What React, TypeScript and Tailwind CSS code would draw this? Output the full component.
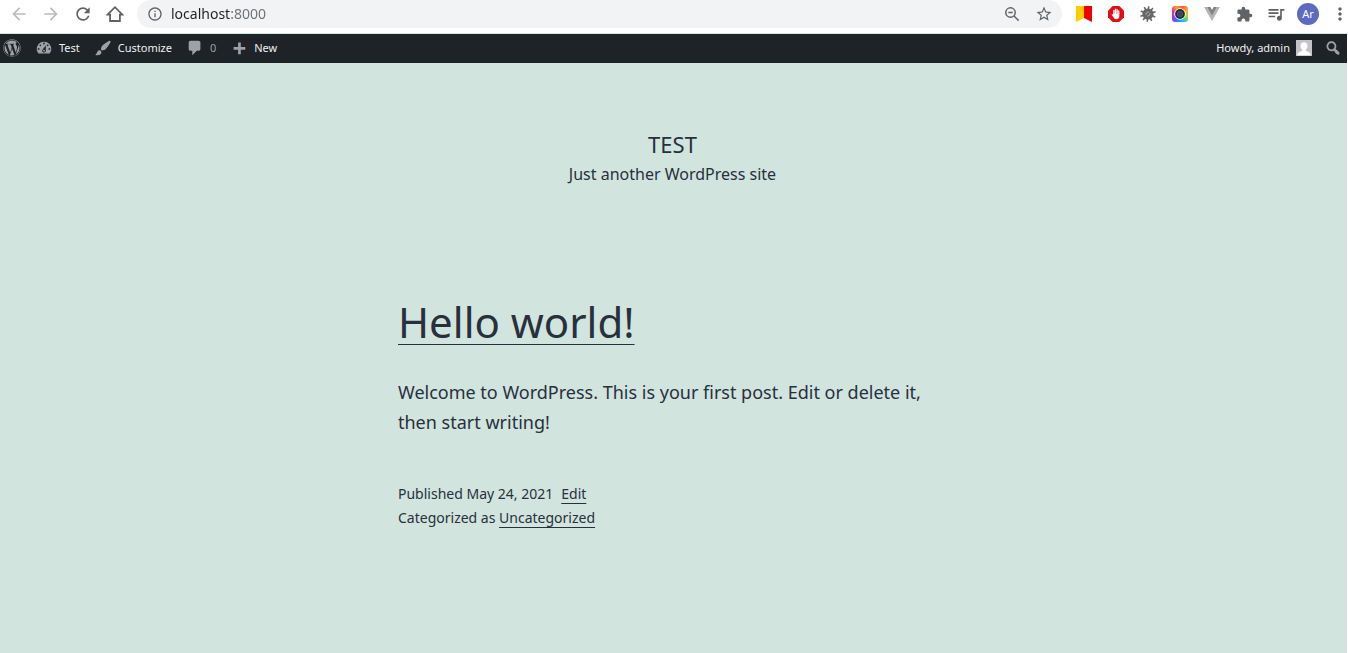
import type { ReactNode } from "react";
import {
  MdArrowBack,
  MdArrowForward,
  MdExtension,
  MdInfoOutline,
  MdMoreVert,
  MdQueueMusic,
  MdRefresh,
  MdStarBorder,
} from "react-icons/md";
import { FaWordpress } from "react-icons/fa";

const dashicons = {
  dashboard:
    "M3.76 16h12.48A7.998 7.998 0 0 0 10 3a7.998 7.998 0 0 0-6.24 13zM10 4c.55 0 1 .45 1 1s-.45 1-1 1-1-.45-1-1 .45-1 1-1zM6 6c.55 0 1 .45 1 1s-.45 1-1 1-1-.45-1-1 .45-1 1-1zm8 0c.55 0 1 .45 1 1s-.45 1-1 1-1-.45-1-1 .45-1 1-1zm-5.37 5.55L12 7v6c0 1.1-.9 2-2 2s-2-.9-2-2c0-.57.24-1.08.63-1.45zM4 10c.55 0 1 .45 1 1s-.45 1-1 1-1-.45-1-1 .45-1 1-1zm12 0c.55 0 1 .45 1 1s-.45 1-1 1-1-.45-1-1 .45-1 1-1zm-5 3c0-.55-.45-1-1-1s-1 .45-1 1 .45 1 1 1 1-.45 1-1z",
  brush:
    "M18.33 3.57s.27-.8-.31-1.36c-.53-.52-1.22-.24-1.22-.24-.61.3-5.76 3.47-7.67 5.57-.86.96-2.06 3.79-1.09 4.82.92.98 3.96-.17 4.79-1 2.06-2.06 5.21-7.17 5.5-7.79zM1.4 17.65c2.37-1.56 1.46-3.41 3.23-4.64.93-.65 2.22-.62 3.08.29.63.67.8 2.57-.16 3.46-1.57 1.45-4 1.55-6.15.89z",
  comments:
    "M5 2h9c1.1 0 2 .9 2 2v7c0 1.1-.9 2-2 2h-2l-5 5v-5H5c-1.1 0-2-.9-2-2V4c0-1.1.9-2 2-2z",
  plus: "M17 9v3h-5v5H9v-5H4V9h5V4h3v5h5z",
  search:
    "M12.14 4.18c1.87 1.87 2.11 4.75.72 6.89.12.1.22.21.36.31.2.16.47.36.81.59.34.24.56.39.66.47.42.31.73.57.94.78.32.32.6.65.84 1 .25.35.44.69.59 1.04.14.35.21.68.18 1-.02.32-.14.59-.36.81s-.49.34-.81.36c-.31.02-.65-.04-.99-.19-.35-.14-.7-.34-1.04-.59-.35-.24-.68-.52-1-.84-.21-.21-.47-.52-.77-.93-.1-.13-.25-.35-.47-.66-.22-.32-.4-.57-.56-.78-.16-.2-.29-.35-.44-.5-2.07 1.09-4.69.76-6.44-.98-2.14-2.15-2.14-5.64 0-7.78 2.15-2.15 5.63-2.15 7.78 0zm-1.41 6.36c1.36-1.37 1.36-3.58 0-4.95-1.37-1.37-3.59-1.37-4.95 0-1.37 1.37-1.37 3.58 0 4.95 1.36 1.37 3.58 1.37 4.95 0z",
};

function Dashicon({ name }: { name: keyof typeof dashicons }) {
  return (
    <svg viewBox="0 0 20 20" className="size-[18px] shrink-0 fill-[#9ca2a7]" aria-hidden="true">
      <path d={dashicons[name]} />
    </svg>
  );
}

function ToolButton({ label, children, disabled }: { label: string; children: ReactNode; disabled?: boolean }) {
  return (
    <button
      type="button"
      aria-label={label}
      disabled={disabled}
      className="flex h-7 w-8 shrink-0 items-center justify-center text-[#5f6368] disabled:text-[#babcbe]"
    >
      {children}
    </button>
  );
}

function HomeIcon() {
  return (
    <svg viewBox="0 0 18 18" className="size-[18px]" fill="none" stroke="currentColor" strokeWidth="1.8" aria-hidden="true">
      <path d="M1.600 9.600 9 2.200l7.400 7.400H13.900V16H4.100V9.600z" />
    </svg>
  );
}

function ZoomOutIcon() {
  return (
    <svg viewBox="0 0 16 16" className="size-4" fill="none" stroke="currentColor" strokeWidth="1.5" aria-hidden="true">
      <circle cx="6.500" cy="6.500" r="4.700" />
      <path d="M4.300 6.500h4.400M10 10l4.600 4.600" />
    </svg>
  );
}

function BookmarkIcon() {
  return (
    <svg viewBox="0 0 16 16" className="size-4" aria-hidden="true">
      <path d="M0 0h8v12L0 16z" fill="#fc0" />
      <path d="M8 0h8v16l-8-4z" fill="#f00000" />
    </svg>
  );
}

function AdblockIcon() {
  return (
    <svg viewBox="0 0 16 16" className="size-4" aria-hidden="true">
      <path d="M4.700 0h6.600L16 4.700v6.600L11.300 16H4.700L0 11.300V4.700z" fill="#e40d12" />
      <path
        d="M5.900 8.200V4.300M7.500 7.500V3.200M9.100 7.500V3.600M10.700 8V5"
        stroke="#fff"
        strokeWidth="1.300"
        strokeLinecap="round"
      />
      <path d="M5.300 7.500h6v2.400c0 2-1.200 3.300-3 3.300-1.500 0-2.300-.8-2.900-2L3.600 8.700c.5-.8 1.200-.5 1.700.2z" fill="#fff" />
    </svg>
  );
}

function BugGearIcon() {
  return (
    <svg viewBox="0 0 16 16" className="size-4" aria-hidden="true">
      <path
        d="M8.700.2 7.300 15.800M12.900 2 3.100 14M15.600 5.700.4 10.300M15.300 11 .7 5M11.700 14.900 4.300 1.100"
        stroke="#666"
        strokeWidth="1.600"
      />
      <circle cx="8" cy="8" r="5.600" fill="#666" />
      <path d="M6 8.600c0-1.600 1-2.600 2.600-2.600M10 7.400c0 1.600-1 2.600-2.600 2.600" stroke="#c4c4c4" strokeWidth="1" fill="none" />
    </svg>
  );
}

function CameraIcon() {
  return (
    <span className="flex size-4 items-center justify-center rounded-[3px] bg-[conic-gradient(from_20deg,#ff5a3d,#ffb01c,#a8df1f,#14c5e8,#2b7cf7,#9b36f5,#f0269b,#ff9f1c,#ff5a3d)]">
      <svg viewBox="0 0 14 14" className="size-3.5" aria-hidden="true">
        <circle cx="7" cy="7" r="5.800" fill="#fff" />
        <circle cx="7" cy="7" r="4.900" fill="#242b38" />
        <circle cx="7" cy="7" r="2.700" fill="#33465a" stroke="#596b7c" strokeWidth=".6" />
      </svg>
    </span>
  );
}

function VueIcon() {
  return (
    <svg viewBox="0 0 16 14" className="h-3.5 w-4" aria-hidden="true">
      <path d="M0 0h6.200L8 3l1.800-3H16L8 14z" fill="#b5b5b5" />
      <path d="M3.200 0h3L8 3l1.800-3h3L8 8.400z" fill="#848484" />
    </svg>
  );
}

function BrowserToolbar() {
  return (
    <header className="flex items-start border-b border-[#d1e4dd] bg-white pb-[5px] pl-[3px]">
      <ToolButton label="Back" disabled>
        <MdArrowBack className="size-5" />
      </ToolButton>
      <ToolButton label="Forward" disabled>
        <MdArrowForward className="size-5" />
      </ToolButton>
      <ToolButton label="Reload">
        <MdRefresh className="size-5" />
      </ToolButton>
      <ToolButton label="Home">
        <HomeIcon />
      </ToolButton>
      <div className="ml-1.5 flex h-7 min-w-0 flex-1 items-center rounded-full bg-[#f1f3f4] pr-0.5 pl-2.5">
        <MdInfoOutline className="size-4 shrink-0 text-[#5f6368]" aria-hidden="true" />
        <input
          aria-label="Address"
          defaultValue="localhost:8000"
          className="ml-2 min-w-0 flex-1 bg-linear-to-r from-[#202124] from-[59px] to-[#6b7075] to-[59px] bg-clip-text text-sm text-transparent outline-none"
        />
        <ToolButton label="Zoom">
          <ZoomOutIcon />
        </ToolButton>
        <ToolButton label="Bookmark this tab">
          <MdStarBorder className="size-[18px]" />
        </ToolButton>
      </div>
      <div className="ml-1.5 flex shrink-0">
        <ToolButton label="Bookmarks">
          <BookmarkIcon />
        </ToolButton>
        <ToolButton label="Ad blocker">
          <AdblockIcon />
        </ToolButton>
        <ToolButton label="Debugger">
          <BugGearIcon />
        </ToolButton>
        <ToolButton label="Screen capture">
          <CameraIcon />
        </ToolButton>
        <ToolButton label="Vue devtools">
          <VueIcon />
        </ToolButton>
        <ToolButton label="Extensions">
          <MdExtension className="size-[17px]" />
        </ToolButton>
        <ToolButton label="Media controls">
          <MdQueueMusic className="size-5" />
        </ToolButton>
        <ToolButton label="Profile">
          <span className="flex size-[22px] items-center justify-center rounded-full bg-[#5c6bc0] text-[11px] text-white">
            Ar
          </span>
        </ToolButton>
      </div>
      <button type="button" aria-label="Menu" className="ml-2 flex h-7 w-4 shrink-0 items-center justify-center text-[#5f6368]">
        <MdMoreVert className="size-5 shrink-0" />
      </button>
    </header>
  );
}

function AdminBar() {
  return (
    <nav
      aria-label="Toolbar"
      className="flex h-[29px] items-center justify-between bg-[#1d2327] pr-[5px] pb-px pl-[3px] text-[11px] text-[#f0f0f1]"
    >
      <div className="flex items-center gap-3.5">
        <a href="#about" aria-label="About WordPress">
          <FaWordpress className="size-[18px] text-[#9ca2a7]" />
        </a>
        <a href="#dashboard" className="flex items-center gap-1.5">
          <Dashicon name="dashboard" />
          Test
        </a>
        <a href="#customize" className="flex items-center gap-1.5">
          <Dashicon name="brush" />
          Customize
        </a>
        <a href="#comments" className="flex items-center gap-1.5 text-[#9ca2a7]">
          <Dashicon name="comments" />
          0
        </a>
        <a href="#new" className="flex items-center gap-1.5">
          <Dashicon name="plus" />
          New
        </a>
      </div>
      <div className="flex items-center gap-3">
        <a href="#profile" className="flex items-center gap-1.5">
          Howdy, admin
          <svg viewBox="0 0 16 16" className="size-4" aria-hidden="true">
            <path d="M0 0h16v16H0z" fill="#c4c4c4" />
            <path
              d="M8 2.200c2.200 0 3.500 1.500 3.500 3.700 0 1.600-.7 3-1.700 3.700v1.200l3.600 1.700c.7.400 1 .9 1 1.700v1H1.600v-1c0-.8.300-1.300 1-1.700l3.600-1.700V9.600c-1-.7-1.700-2.100-1.700-3.700C4.500 3.700 5.800 2.200 8 2.200z"
              fill="#fff"
            />
          </svg>
        </a>
        <button type="button" aria-label="Search">
          <Dashicon name="search" />
        </button>
      </div>
    </nav>
  );
}

export default function App() {
  return (
    <div className="flex min-h-screen flex-col bg-white font-['Noto_Sans','Open_Sans',sans-serif]">
      <BrowserToolbar />
      <div className="mr-px flex flex-1 flex-col bg-[#d1e4dd] text-[#28303d]">
        <AdminBar />
        <div className="pt-[66px] pr-[26px] pl-6">
          <header className="text-center">
            <h1 className="text-[22px] leading-[30px] uppercase">Test</h1>
            <p className="text-base leading-[30px]">Just another WordPress site</p>
          </header>
          <main className="mx-auto mt-[104px] max-w-[549px]">
            <article>
              <h2 className="text-[42px] leading-[58px]">
                <a href="#hello-world" className="underline decoration-1 underline-offset-[6px]">
                  Hello world!
                </a>
              </h2>
              <p className="mt-[26px] text-lg leading-[30px]">
                Welcome to WordPress. This is your first post. Edit or delete it, then start writing!
              </p>
              <footer className="mt-[45px] text-sm leading-6">
                <p>
                  Published <time dateTime="2021-05-24">May 24, 2021</time>
                  <a href="#edit" className="ml-2 underline decoration-1 underline-offset-4">
                    Edit
                  </a>
                </p>
                <p>
                  Categorized as{" "}
                  <a href="#uncategorized" className="underline decoration-1 underline-offset-4">
                    Uncategorized
                  </a>
                </p>
              </footer>
            </article>
          </main>
        </div>
      </div>
    </div>
  );
}
